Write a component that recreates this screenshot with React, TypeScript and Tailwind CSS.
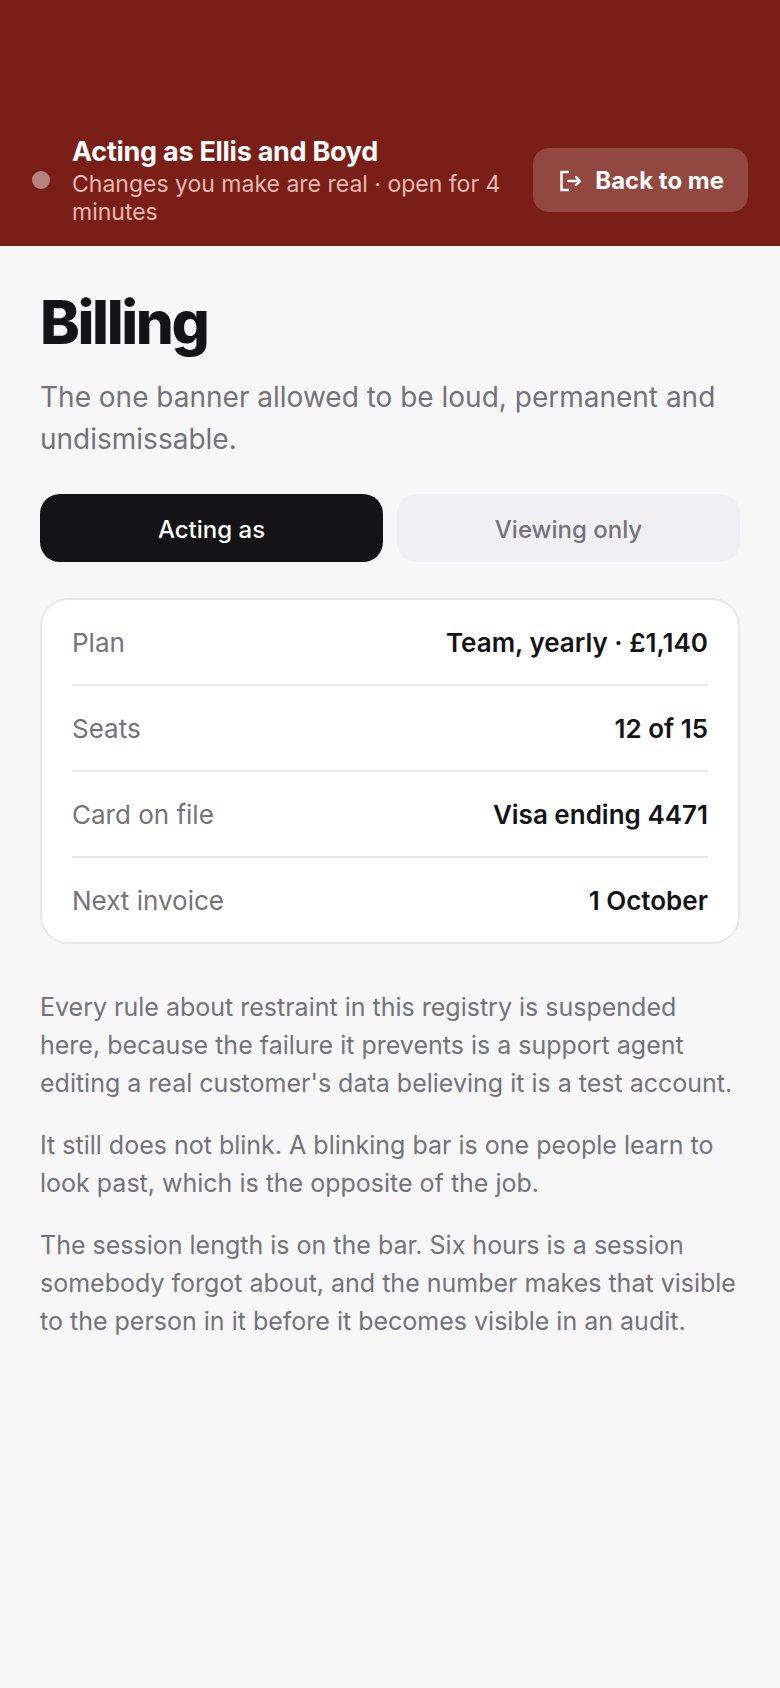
import { useState } from "react";

const rows = [
    { label: "Plan", value: "Team, yearly · £1,140" },
    { label: "Seats", value: "12 of 15" },
    { label: "Card on file", value: "Visa ending 4471" },
    { label: "Next invoice", value: "1 October" },
];

const notes = [
    "Every rule about restraint in this registry is suspended here, because the failure it prevents is a support agent editing a real customer's data believing it is a test account.",
    "It still does not blink. A blinking bar is one people learn to look past, which is the opposite of the job.",
    "The session length is on the bar. Six hours is a session somebody forgot about, and the number makes that visible to the person in it before it becomes visible in an audit.",
];

const modes = ["Acting as", "Viewing only"];


const Banner = () => {
    return (
        <header className="flex items-center bg-[#7a1f17] px-8 pt-[134px] pb-5">

            <span className="mr-[22px] size-[18px] shrink-0 rounded-full bg-white/45" />

            <div className="min-w-0 flex-1">
                <p className="text-[27px] leading-9 font-bold tracking-[-0.01em] text-white">Acting as Ellis and Boyd</p>
                <p className="text-[23px] leading-7 text-[#e9b8b2]">Changes you make are real · open for 4 minutes</p>
            </div>

            <button type="button" className="ml-[22px] flex h-16 shrink-0 items-center gap-3 rounded-2xl bg-white/18 px-6 pt-0.5 text-2xl font-bold text-white">
                <svg viewBox="0 0 26 26" fill="none" stroke="currentColor" strokeWidth="2.4" strokeLinecap="round" strokeLinejoin="round" className="size-[26px]">
                    <path strokeLinecap="butt" strokeLinejoin="miter" d="M12 4H4.500v18H12" />
                    <path d="M11.500 13H23M19 9l4 4-4 4" />
                </svg>
                Back to me
            </button>

        </header>
    );
};


const App = () => {
    const [mode, setMode] = useState("Acting as");

    return (
        <div className="min-h-screen bg-[#f7f7f7] font-[Inter,sans-serif] [font-optical-sizing:none]">

            <Banner />

            <main className="px-10 pt-10 pb-10">

                <h1 className="text-6xl leading-[72px] font-extrabold tracking-[-0.04em] text-[#141417]">Billing</h1>
                <p className="mt-[18px] text-[28px] leading-[42px] text-[#73737b]">
                    The one banner allowed to be loud, permanent and undismissable.
                </p>

                {/* Mode switch */}
                <div className="mt-[34px] grid grid-cols-2 gap-[14px]">
                    {modes.map((item) => (
                        <button
                            key={item}
                            type="button"
                            aria-pressed={mode === item}
                            onClick={() => setMode(item)}
                            className={`h-[68px] rounded-[20px] pt-1 text-2xl font-medium ${mode === item ? "bg-[#141417] text-white" : "bg-[#f0f0f4] text-[#73737b]"}`}
                        >
                            {item}
                        </button>
                    ))}
                </div>

                {/* Plan details */}
                <dl className="mt-9 divide-y-2 divide-[#e8e8e9] rounded-[28px] border-2 border-[#e8e8e9] bg-white px-[30px]">
                    {rows.map((row) => (
                        <div key={row.label} className="flex items-center justify-between pt-[25px] pb-[23px] text-[26px] leading-9">
                            <dt className="text-[#73737b]">{row.label}</dt>
                            <dd className="font-semibold text-[#141417]">{row.value}</dd>
                        </div>
                    ))}
                </dl>

                <div className="mt-11 space-y-6 text-[25px] leading-[38px] text-[#73737b]">
                    {notes.map((note) => (
                        <p key={note}>{note}</p>
                    ))}
                </div>

            </main>

        </div>
    );
};

export default App;
